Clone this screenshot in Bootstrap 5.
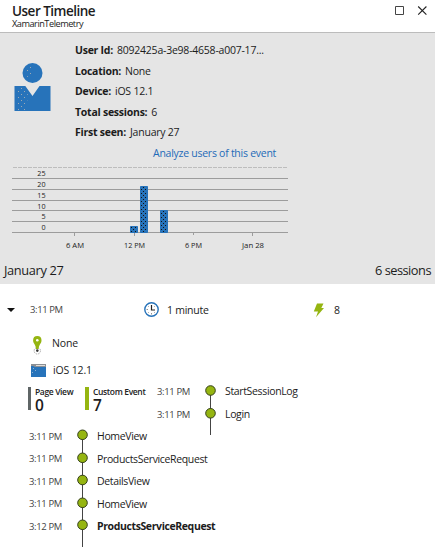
<!DOCTYPE html>
<html lang="en">
<head>
<meta charset="utf-8">
<meta name="viewport" content="width=device-width, initial-scale=1">
<title>User Timeline</title>
<link href="https://cdn.jsdelivr.net/npm/bootstrap@5.3.0/dist/css/bootstrap.min.css" rel="stylesheet">
<style>
body{font-family:"Open Sans","Noto Sans",sans-serif;font-size:10.5px;line-height:14px;color:#1c1c1c;letter-spacing:-.15px;height:548px;overflow:hidden;white-space:nowrap}
svg{display:block;flex:none}
.pane-head{height:33px;padding:3px 7px 0 12px;border-bottom:1px solid #bcbcbc}
.pane-title{font-size:13.5px;line-height:16px;font-weight:600;letter-spacing:-.5px;margin:0}
.pane-sub{font-size:9.2px;line-height:10px;letter-spacing:-.48px}
.win-icons{margin-top:2px}
.summary{background:#e5e5e5;height:251px}
.avatar-box{width:75px;padding:30px 0 0 14px}
.facts{padding-top:7px}
.facts div{height:20.5px;line-height:20.5px;letter-spacing:-.23px}
.facts b{font-weight:700;letter-spacing:-.25px;margin-right:1.500px}
.analyze{color:#1f6bb8;font-weight:500;text-decoration:none;margin-left:153px;height:19px;line-height:21px;letter-spacing:-.26px}
.chart-svg{margin:3px 0 0 12px}
.chart-svg text{font-size:7.2px;letter-spacing:0;fill:#222}
.day-row{font-size:12.8px;line-height:18px;padding:8px 4px 0;letter-spacing:-.36px}
.day-row span:last-child{letter-spacing:-.5px}
.session-row{height:51px;margin-bottom:1px;padding-left:7px}
.time{font-size:9.5px;color:#444;letter-spacing:-.4px}
.c-time{width:114px;padding-left:0}
.c-span{width:154px;padding-left:8px;letter-spacing:-.25px}
.c-count{padding-left:8px}
.detail{height:27px;padding-left:29px}
.detail.short{height:20px}
.metrics{height:42px;padding:4px 0 0 28px}
.metric{height:23px;border-left:3px solid #5f6566;padding-left:4px;width:57px}
.metric.green{border-left:4px solid #95b511;width:72px}
.metric span{display:block;font-size:8.5px;line-height:9px;font-weight:600;letter-spacing:-.36px;color:#222}
.metric strong{display:block;font-size:15.5px;line-height:18px;font-weight:600}
.mini{margin-top:-2px;height:50px}
.event{height:22.5px;letter-spacing:-.35px}
.event.fw-bold{letter-spacing:-.39px}
.mini-times{width:47px}
.mini-names{margin-top:-1px}
.log{padding-left:29px}
.log-times{width:48px;padding-top:4.500px}
.log-names{padding-top:4px}
</style>
</head>
<body class="bg-white">
<header class="pane-head d-flex justify-content-between">
  <div>
    <h1 class="pane-title">User Timeline</h1>
    <div class="pane-sub">XamarinTelemetry</div>
  </div>
  <svg class="win-icons" width="34" height="12" fill="none" stroke="#444"><path d="M1.500 1.500h8v8h-8z"/><path d="M24.200 1.500l8.200 8.200M32.400 1.500l-8.200 8.200" stroke="#222" stroke-width="1.100"/></svg>
</header>

<section class="summary">
  <div class="d-flex">
    <div class="avatar-box">
      <svg width="37" height="50" viewBox="0 0 37 50">
        <defs>
          <pattern id="speck" width="6" height="6" patternUnits="userSpaceOnUse"><path d="M1 1h1v1H1zM4 4h1v1H4z" fill="#9ca9b4"/></pattern>
          <pattern id="grain" width="4" height="4" patternUnits="userSpaceOnUse"><rect width="4" height="4" fill="#2773ba"/><path d="M1 1h1v1H1zM3 3h1v1H3z" fill="#111"/></pattern>
        </defs>
        <g fill="#2773ba"><circle cx="18.500" cy="10" r="10"/><path d="M.5 23h10.800l7.200 10L25.500 23h11v25H.5z"/></g>
        <path d="M10 5l8-3v14l-6-3zM2 24h7l5 8-2 15H2z" fill="url(#speck)"/>
      </svg>
    </div>
    <div class="facts">
      <div><b>User Id:</b> 8092425a-3e98-4658-a007-17...</div>
      <div><b>Location:</b> None</div>
      <div><b>Device:</b> iOS 12.1</div>
      <div><b>Total sessions:</b> 6</div>
      <div><b>First seen:</b> January 27</div>
    </div>
  </div>
  <a class="analyze d-block" href="#">Analyze users of this event</a>
  <svg class="chart-svg" width="276" height="88" viewBox="12 165 276 88">
    <path d="M13 167.500h275" stroke="#bdbdbd" stroke-dasharray="4 1"/>
    <path d="M12 178.500h276M12 189.500h276M12 200.500h276M12 210.500h276M12 221.500h276M12 232.500h276M74.500 233v3M134.500 233v3M193.500 233v2M252.500 233v3" stroke="#9c9c9c"/>
    <g fill="url(#grain)" stroke="#2773ba"><path d="M130.500 226.500h7v6h-7zM140.500 186.500h7v46h-7zM160.500 210.500h7v22h-7z"/></g>
    <g text-anchor="end"><text x="45.500" y="176">25</text><text x="45.500" y="187">20</text><text x="45.500" y="198">15</text><text x="45.500" y="209">10</text><text x="45.500" y="219">5</text><text x="45.500" y="230">0</text></g>
    <text x="66" y="248" textLength="18" lengthAdjust="spacingAndGlyphs">6 AM</text><text x="124" y="248" textLength="21" lengthAdjust="spacingAndGlyphs">12 PM</text><text x="185" y="248" textLength="17" lengthAdjust="spacingAndGlyphs">6 PM</text><text x="242" y="248" textLength="22" lengthAdjust="spacingAndGlyphs">Jan 28</text>
  </svg>
  <div class="day-row d-flex justify-content-between"><span>January 27</span><span>6 sessions</span></div>
</section>

<main>
  <div class="session-row d-flex align-items-center">
    <svg width="23" height="8"><path d="M0 2h8L4 6z" fill="#111"/></svg>
    <span class="time c-time">3:11 PM</span>
    <svg width="15" height="15" viewBox="0 0 15 15" fill="none"><circle cx="7.500" cy="7.500" r="6.700" fill="#fff" stroke="#2773ba" stroke-width="1.400"/><path d="M7.500 3v5H11" stroke="#222" stroke-width="1.200"/><path d="M7.500 11v1.500M2.500 7.500H4M4 4l.7.700M4 11l.7-.7M11 4l-.7.700M11 11l-.7-.7" stroke="#777" stroke-width=".8"/></svg>
    <span class="c-span">1 minute</span>
    <svg width="13" height="16" viewBox="0 0 13 16"><path d="M4 1.500h6.500L8.300 6H11L3 15.200 5 9.500H.8z" fill="#95b511"/></svg>
    <span class="c-count">8</span>
  </div>
  <div class="detail d-flex align-items-start">
    <svg width="23" height="19" viewBox="0 0 23 19"><circle cx="8.300" cy="14.800" r="3.200" fill="none" stroke="#aaa" stroke-dasharray="1.500 1"/><path d="M8.300 0a4.300 4.300 0 0 1 4.200 4.300C12.500 8 10 8 9.600 13H7C6.700 8 4.100 8 4.100 4.300A4.300 4.300 0 0 1 8.300 0z" fill="#95b511"/><circle cx="8.300" cy="14.600" r="1.300" fill="#333"/><circle cx="8.300" cy="4.300" r="1.300" fill="#fff"/></svg>
    <span>None</span>
  </div>
  <div class="detail short d-flex align-items-start">
    <svg width="24" height="15" viewBox="0 0 24 15"><path d="M2 1h15v13H2z" fill="#2773ba"/><path d="M2 1h15v3H6L4 3H2z" fill="#8b8f94"/><path d="M7 2.500h9" stroke="#e0ddda"/><path d="M4 5h1v1H4zM6 7h1v1H6zM3 9h1v1H3z" fill="#8fb0cf"/></svg>
    <span>iOS 12.1</span>
  </div>
  <div class="metrics d-flex align-items-start">
    <div class="metric"><span>Page View</span><strong>0</strong></div>
    <div class="metric green"><span>Custom Event</span><strong>7</strong></div>
    <div class="mini d-flex">
      <div class="mini-times"><div class="event time">3:11 PM</div><div class="event time">3:11 PM</div></div>
      <svg width="21" height="52" viewBox="0 0 21 52"><path d="M6.500 5v45" stroke="#444"/><g fill="#95b511" stroke="#35401a"><circle cx="6.500" cy="5.500" r="4.800"/><circle cx="6.500" cy="28.300" r="4.800"/></g></svg>
      <div class="mini-names"><div class="event">StartSessionLog</div><div class="event">Login</div></div>
    </div>
  </div>
  <div class="log d-flex">
    <div class="log-times"><div class="event time">3:11 PM</div><div class="event time">3:11 PM</div><div class="event time">3:11 PM</div><div class="event time">3:11 PM</div><div class="event time">3:12 PM</div></div>
    <svg width="20" height="122" viewBox="0 0 20 122"><path d="M5.500 7v115" stroke="#444"/><g fill="#95b511" stroke="#35401a"><circle cx="5.500" cy="9.800" r="4.800"/><circle cx="5.500" cy="32.800" r="4.800"/><circle cx="5.500" cy="55" r="4.800"/><circle cx="5.500" cy="77.800" r="4.800"/><circle cx="5.500" cy="99.800" r="4.800"/></g></svg>
    <div class="log-names"><div class="event">HomeView</div><div class="event">ProductsServiceRequest</div><div class="event">DetailsView</div><div class="event">HomeView</div><div class="event fw-bold">ProductsServiceRequest</div></div>
  </div>
</main>
<script src="https://cdn.jsdelivr.net/npm/bootstrap@5.3.0/dist/js/bootstrap.bundle.min.js"></script>
</body>
</html>
